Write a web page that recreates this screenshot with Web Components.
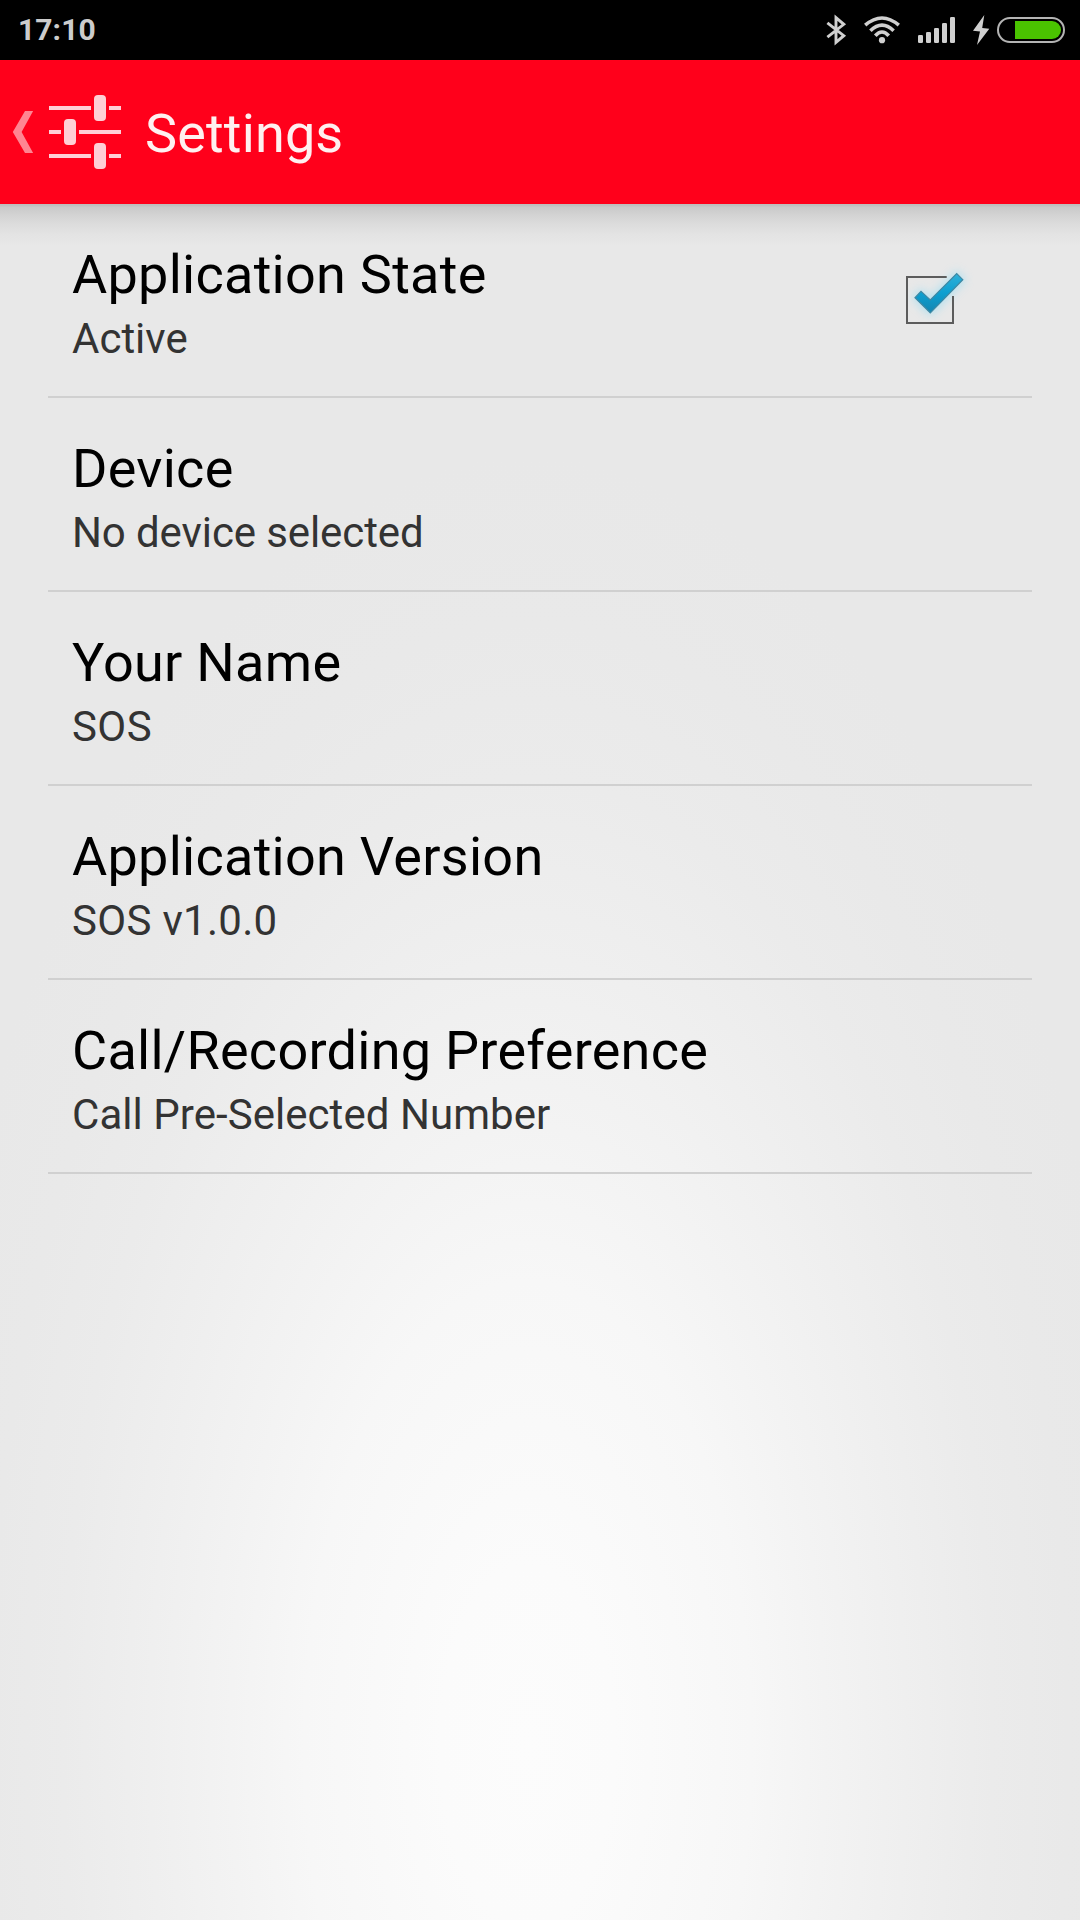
<!DOCTYPE html>
<html lang="en">
<head>
<meta charset="utf-8">
<title>Settings</title>
<style>
    body {
        margin: 0;
        font-family: Roboto, "Noto Sans", sans-serif;
    }
</style>
</head>
<body>

<settings-screen>
    <status-bar slot="status" time="17:10"></status-bar>
    <action-bar slot="header">Settings</action-bar>
    <preference-item>
        <span slot="title">Application State</span>
        <span slot="summary">Active</span>
        <check-box slot="widget"></check-box>
    </preference-item>
    <preference-item style="--summary-spacing: -0.1px">
        <span slot="title">Device</span>
        <span slot="summary">No device selected</span>
    </preference-item>
    <preference-item style="--summary-spacing: 0.4px">
        <span slot="title">Your Name</span>
        <span slot="summary">SOS</span>
    </preference-item>
    <preference-item style="--summary-spacing: 0.3px">
        <span slot="title">Application Version</span>
        <span slot="summary">SOS v1.0.0</span>
    </preference-item>
    <preference-item style="--summary-spacing: 0.05px">
        <span slot="title">Call/Recording Preference</span>
        <span slot="summary">Call Pre-Selected Number</span>
    </preference-item>
</settings-screen>

<script>
function makeTemplate(html) {
    const template = document.createElement("template");
    template.innerHTML = html;
    return template;
}

const screenTemplate = makeTemplate(`
<style>
    :host {
        display: flex;
        flex-direction: column;
        width: 1080px;
        height: 1920px;
        overflow: hidden;
        background: radial-gradient(620px 1290px at 528px 1746px,
            #fcfcfc 0%, #fbfbfb 14%, #f9f9f9 25%, #f7f7f7 36%, #f3f3f3 48%,
            #efefef 61%, #ebebeb 75%, #e9e9e9 87%, #e8e8e8 100%);
    }
    main {
        flex: 1;
        padding: 0 48px;
        background: linear-gradient(#bebebe 0, #c1c1c1 2px, #c9c9c9 3px, #d3d3d3 11px,
            #dcdcdc 20px, #e3e3e3 30px, rgba(232, 232, 232, 0) 42px) no-repeat;
    }
</style>

<slot name="status"></slot>
<slot name="header"></slot>
<main><slot></slot></main>
`);

class SettingsScreen extends HTMLElement {
    constructor() {
        super();
        this.attachShadow({ mode: "open" });
        this.shadowRoot.appendChild(screenTemplate.content.cloneNode(true));
    }
}

const statusTemplate = makeTemplate(`
<style>
    :host {
        display: flex;
        align-items: center;
        justify-content: space-between;
        box-sizing: border-box;
        height: 60px;
        padding: 0 15px 0 18px;
        background: #000;
        color: #ccc;
    }
    #time {
        font-size: 30px;
        font-weight: 700;
        line-height: 60px;
        letter-spacing: 0.1px;
    }
    .icons {
        display: flex;
        align-items: center;
    }
    svg {
        display: block;
        overflow: visible;
        fill: #d0d0d0;
    }
    .line {
        fill: none;
        stroke: #d0d0d0;
    }
    .bluetooth { margin-right: 17px; }
    .wifi { margin-right: 18px; }
    .signal { margin-right: 18px; }
    .bolt { margin-right: 7px; }
</style>

<span id="time"></span>
<div class="icons">
    <svg class="bluetooth" width="21" height="30" viewBox="0 0 21 30">
        <path class="line" stroke-width="2.9" d="M1.4 7.8 L17.8 20.7 L10 27.4 V2.6 L17.8 9.3 L1.4 22.2"/>
    </svg>
    <svg class="wifi" width="36" height="28" viewBox="0 0 36 28">
        <g class="line" stroke-width="3.6">
            <path d="M1.2 9.2 Q18 -5.2 34.8 9.2"/>
            <path d="M6.4 14.7 Q18 3.6 29.6 14.7"/>
            <path d="M11.3 19.8 Q18 12.2 24.7 19.8"/>
        </g>
        <circle cx="18" cy="24.2" r="3.1"/>
    </svg>
    <svg class="signal" width="37" height="26" viewBox="0 0 37 26">
        <rect x="0" y="18" width="5" height="8" rx="1.3"/>
        <rect x="8" y="15" width="5" height="11" rx="1.3"/>
        <rect x="16" y="11" width="5" height="15" rx="1.3"/>
        <rect x="24" y="6" width="5" height="20" rx="1.3"/>
        <rect x="32" y="0" width="5" height="26" rx="1.3"/>
    </svg>
    <svg class="bolt" width="17" height="30" viewBox="0 0 17 30">
        <path d="M11.3 0 L0 15.8 L7 16.4 L4 30 L16.3 13.7 L9.2 13.1 Z"/>
    </svg>
    <svg width="68" height="26" viewBox="0 0 68 26">
        <rect x="1" y="1" width="66" height="24" rx="12" fill="none" stroke="#b4b4b4" stroke-width="2"/>
        <path fill="#4ac300" d="M18 4 H55 A9 9 0 0 1 55 22 H18 Z"/>
    </svg>
</div>
`);

class StatusBar extends HTMLElement {
    static get observedAttributes() {
        return ["time"];
    }

    constructor() {
        super();
        this.attachShadow({ mode: "open" });
        this.shadowRoot.appendChild(statusTemplate.content.cloneNode(true));
        this.time = this.shadowRoot.getElementById("time");
    }

    attributeChangedCallback(attr, oldVal, newVal) {
        if (oldVal === newVal) return;
        this.time.textContent = newVal;
    }
}

const actionBarTemplate = makeTemplate(`
<style>
    :host {
        display: flex;
        align-items: center;
        height: 144px;
        background: #ff001b;
        color: #fff0f0;
    }
    svg {
        display: block;
    }
    .up {
        margin: 0 16px 0 12px;
        fill: #ff8592;
    }
    .tune {
        margin-right: 24px;
        fill: #ffcfd6;
    }
    h1 {
        margin: 4px 0 0;
        font-size: 54px;
        font-weight: 400;
        line-height: 64px;
        letter-spacing: 0.15px;
    }
</style>

<svg class="up" width="21" height="42" viewBox="0 0 21 42">
    <path d="M13 0 H21.2 L9.6 21 L21.2 42 H13 L0.8 21 Z"/>
</svg>
<svg class="tune" width="72" height="74" viewBox="0 0 72 74">
    <path d="M0 11h42v4H0z M60 11h12v4H60z M0 35h12v4H0z M30 35h42v4H30z M0 59h42v4H0z M60 59h12v4H60z"/>
    <rect x="45" y="0" width="12" height="26" rx="4"/>
    <rect x="15" y="24" width="12" height="26" rx="4"/>
    <rect x="45" y="48" width="12" height="26" rx="4"/>
</svg>
<h1><slot></slot></h1>
`);

class ActionBar extends HTMLElement {
    constructor() {
        super();
        this.attachShadow({ mode: "open" });
        this.shadowRoot.appendChild(actionBarTemplate.content.cloneNode(true));
    }
}

const preferenceTemplate = makeTemplate(`
<style>
    :host {
        display: flex;
        align-items: center;
        justify-content: space-between;
        box-sizing: border-box;
        height: 194px;
        padding: 0 54px 0 24px;
        border-bottom: 2px solid #d0d0d0;
    }
    .text {
        padding-top: 6px;
    }
    .title {
        font-size: 54px;
        line-height: 64px;
        letter-spacing: 0.27px;
        color: #000;
    }
    .summary {
        margin-top: 7px;
        font-size: 42px;
        line-height: 50px;
        letter-spacing: var(--summary-spacing, 0);
        color: #333;
    }
</style>

<div class="text">
    <div class="title"><slot name="title"></slot></div>
    <div class="summary"><slot name="summary"></slot></div>
</div>
<slot name="widget"></slot>
`);

class PreferenceItem extends HTMLElement {
    constructor() {
        super();
        this.attachShadow({ mode: "open" });
        this.shadowRoot.appendChild(preferenceTemplate.content.cloneNode(true));
    }
}

const checkBoxTemplate = makeTemplate(`
<style>
    :host {
        display: block;
        width: 96px;
        height: 96px;
    }
    svg {
        display: block;
    }
</style>

<svg width="96" height="96" viewBox="0 0 96 96">
    <defs>
        <linearGradient id="tick" x1="0" y1="0" x2="0" y2="1">
            <stop offset="0" stop-color="#2fb0d8"/>
            <stop offset="0.5" stop-color="#0c9fd0"/>
            <stop offset="1" stop-color="#1585b0"/>
        </linearGradient>
        <filter id="glow" x="-50%" y="-50%" width="200%" height="200%">
            <feGaussianBlur stdDeviation="5"/>
        </filter>
    </defs>
    <path d="M33 45.7 L39 39 L48.3 48 L74.7 21 L81.3 27.7 L48.3 61.3 Z"
        fill="#8fdcf5" stroke="#8fdcf5" stroke-width="4" opacity="0.6" filter="url(#glow)"/>
    <path d="M64.7 25 H25 V71 H71 V44" fill="none" stroke="#5c5c5c" stroke-width="2"/>
    <path d="M33 45.7 L39 39.3 L48.3 48 L74.7 21.5 L80.8 27.7 L48.3 60.8 Z"
        fill="url(#tick)" stroke="#3f88a3" stroke-width="1.2"/>
</svg>
`);

class CheckBox extends HTMLElement {
    constructor() {
        super();
        this.attachShadow({ mode: "open" });
        this.shadowRoot.appendChild(checkBoxTemplate.content.cloneNode(true));
    }
}

window.customElements.define("settings-screen", SettingsScreen);
window.customElements.define("status-bar", StatusBar);
window.customElements.define("action-bar", ActionBar);
window.customElements.define("preference-item", PreferenceItem);
window.customElements.define("check-box", CheckBox);
</script>
</body>
</html>
